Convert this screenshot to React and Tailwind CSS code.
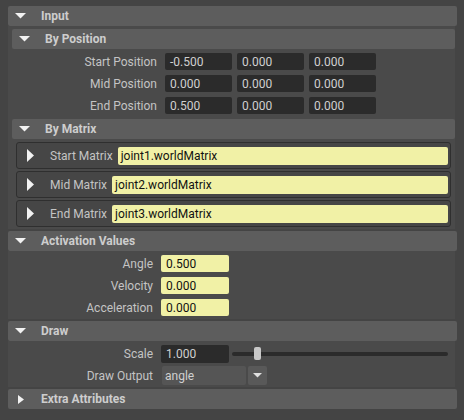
import React from "react";

const TriDown = () => (
  <svg width="11" height="6" viewBox="0 0 11 6" className="shrink-0">
    <polygon points="0,0 11,0 5.5,5.5" fill="#f2f2f2" />
  </svg>
);
const TriRight = ({ w = 7, h = 13 }) => (
  <svg width={w} height={h} viewBox={`0 0 ${w} ${h}`} className="shrink-0">
    <polygon points={`0,0 ${w},${h / 2} 0,${h}`} fill="#f2f2f2" />
  </svg>
);

const MainHeader = ({ title, open = true }) => (
  <div className="h-[20px] rounded-[2px] bg-[#5d5d5d] flex items-center">
    <div className="w-[33px] pl-[7px] flex items-center">
      {open ? <TriDown /> : <div className="pl-[3px]"><TriRight w={6} h={9} /></div>}
    </div>
    <span className="font-bold text-[#cdcdcd]">{title}</span>
  </div>
);

const SubHeader = ({ title }) => (
  <div className="h-[20px] rounded-[2px] bg-[#5d5d5d] flex items-center">
    <div className="w-[33px] pl-[7px] flex items-center">
      <TriDown />
    </div>
    <span className="font-bold text-[#cdcdcd]">{title}</span>
  </div>
);

const Dark = ({ v, w = "w-[67px]", h = "h-[17px]" }) => (
  <div className={`${w} ${h} rounded-[2px] bg-[#2b2b2b] text-[#d0d0d0] flex items-center pl-[5px]`}>{v}</div>
);
const Yellow = ({ v }) => (
  <div className="w-[68px] h-[17px] rounded-[2px] bg-[#f1f1a6] text-[#111] flex items-center pl-[5px]">{v}</div>
);

const PosRow = ({ label, vals }) => (
  <div className="h-[17px] flex items-center">
    <div className="w-[145px] text-right text-[#c4c4c4]">{label}</div>
    <div className="ml-[8px] flex gap-[5px]">
      {vals.map((v, i) => (
        <Dark key={i} v={v} />
      ))}
    </div>
  </div>
);

const MatRow = ({ label, v }) => (
  <div className="h-[27px] rounded-[3px] border border-[#2f2f2f] bg-[#464646] flex items-center pr-[2px]">
    <div className="pl-[10px] w-[33px] flex items-center">
      <TriRight />
    </div>
    <span className="text-[#c4c4c4] whitespace-nowrap">{label}</span>
    <div className="ml-[5px] flex-1 h-[18px] rounded-[2px] bg-[#f1f1a6] text-[#111] flex items-center pl-[3px]">{v}</div>
  </div>
);

const ActRow = ({ label, v }) => (
  <div className="h-[17px] flex items-center">
    <div className="w-[145px] text-right text-[#c4c4c4]">{label}</div>
    <div className="ml-[8px]">
      <Yellow v={v} />
    </div>
  </div>
);

export default function App() {
  return (
    <div
      className="w-[464px] h-[420px] bg-[#444444] pt-[6px] pl-[8px] pr-[7px] text-[12px] leading-none overflow-hidden"
      style={{ fontFamily: "Roboto, 'Noto Sans', sans-serif" }}
    >
      <MainHeader title="Input" />
      <div className="mr-[2px] bg-[#4a4a4a] pl-[4px] pt-[3px] pb-[2px]">
        <SubHeader title="By Position" />
        <div className="pt-[4px] pb-[5px] flex flex-col gap-[5px]">
          <PosRow label="Start Position" vals={["-0.500", "0.000", "0.000"]} />
          <PosRow label="Mid Position" vals={["0.000", "0.000", "0.000"]} />
          <PosRow label="End Position" vals={["0.500", "0.000", "0.000"]} />
        </div>
        <SubHeader title="By Matrix" />
        <div className="pt-[3px] px-[4px] flex flex-col gap-[2px]">
          <MatRow label="Start Matrix" v="joint1.worldMatrix" />
          <MatRow label="Mid Matrix" v="joint2.worldMatrix" />
          <MatRow label="End Matrix" v="joint3.worldMatrix" />
        </div>
      </div>
      <div className="h-[2px]" />
      <MainHeader title="Activation Values" />
      <div className="mr-[2px] bg-[#4a4a4a] pt-[4px] pb-[3px] flex flex-col gap-[5px]">
        <ActRow label="Angle" v="0.500" />
        <ActRow label="Velocity" v="0.000" />
        <ActRow label="Acceleration" v="0.000" />
      </div>
      <div className="h-[2px]" />
      <MainHeader title="Draw" />
      <div className="mr-[2px] bg-[#4a4a4a] pt-[4px] pb-[2px] flex flex-col gap-[3px]">
        <div className="h-[18px] flex items-center">
          <div className="w-[145px] text-right text-[#c4c4c4]">Scale</div>
          <div className="ml-[8px]">
            <Dark v="1.000" w="w-[68px]" h="h-[18px]" />
          </div>
          <div className="ml-[3px] w-[216px] h-[18px] relative flex items-center">
            <div className="w-full h-[4px] rounded-full bg-[#2b2b2b]" />
            <div className="absolute left-[22px] top-[2px] w-[7px] h-[13px] rounded-[2px] bg-[#c8c8c8]" />
          </div>
        </div>
        <div className="h-[19px] flex items-center">
          <div className="w-[145px] text-right text-[#c4c4c4]">Draw Output</div>
          <div className="ml-[9px] flex gap-[2px]">
            <div className="w-[84px] h-[19px] rounded-[2px] bg-[#555555] text-[#d0d0d0] flex items-center pl-[3px]">angle</div>
            <div className="w-[19px] h-[19px] rounded-[2px] bg-[#595959] flex items-center justify-center">
              <svg width="9" height="5" viewBox="0 0 9 5">
                <polygon points="0,0 9,0 4.5,4.5" fill="#e0e0e0" />
              </svg>
            </div>
          </div>
        </div>
      </div>
      <div className="h-[2px]" />
      <MainHeader title="Extra Attributes" open={false} />
    </div>
  );
}
